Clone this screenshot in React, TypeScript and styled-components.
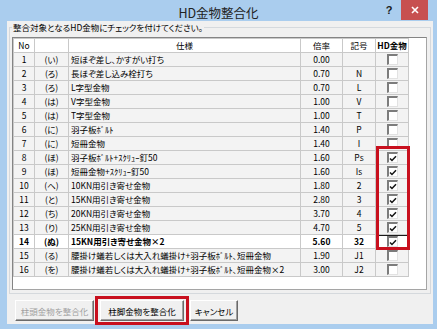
import React from 'react';
import styled, { createGlobalStyle } from 'styled-components';

const GlobalStyle = createGlobalStyle`
  html, body {
    margin: 0;
    padding: 0;
  }
  body {
    font-family: "Noto Sans CJK JP", "Noto Sans", sans-serif;
    font-feature-settings: "palt";
    background: #ffffff;
    color: #000000;
  }
  * {
    box-sizing: border-box;
  }
`;

type Item = {
  no: number;
  kana: string;
  spec: string;
  rate: string;
  code: string;
  checked: boolean;
};

const items: Item[] = [
  { no: 1, kana: '(い)', spec: '短ほぞ差し、かすがい打ち', rate: '0.00', code: '', checked: false },
  { no: 2, kana: '(ろ)', spec: '長ほぞ差し込み栓打ち', rate: '0.70', code: 'N', checked: false },
  { no: 3, kana: '(ろ)', spec: 'L字型金物', rate: '0.70', code: 'L', checked: false },
  { no: 4, kana: '(は)', spec: 'V字型金物', rate: '1.00', code: 'V', checked: false },
  { no: 5, kana: '(は)', spec: 'T字型金物', rate: '1.00', code: 'T', checked: false },
  { no: 6, kana: '(に)', spec: '羽子板ﾎﾞﾙﾄ', rate: '1.40', code: 'P', checked: false },
  { no: 7, kana: '(に)', spec: '短冊金物', rate: '1.40', code: 'I', checked: false },
  { no: 8, kana: '(ほ)', spec: '羽子板ﾎﾞﾙﾄ+ｽｸﾘｭｰ釘50', rate: '1.60', code: 'Ps', checked: true },
  { no: 9, kana: '(ほ)', spec: '短冊金物+ｽｸﾘｭｰ釘50', rate: '1.60', code: 'Is', checked: true },
  { no: 10, kana: '(へ)', spec: '10KN用引き寄せ金物', rate: '1.80', code: '2', checked: true },
  { no: 11, kana: '(と)', spec: '15KN用引き寄せ金物', rate: '2.80', code: '3', checked: true },
  { no: 12, kana: '(ち)', spec: '20KN用引き寄せ金物', rate: '3.70', code: '4', checked: true },
  { no: 13, kana: '(り)', spec: '25KN用引き寄せ金物', rate: '4.70', code: '5', checked: true },
  { no: 14, kana: '(ぬ)', spec: '15KN用引き寄せ金物×2', rate: '5.60', code: '32', checked: true },
  { no: 15, kana: '(る)', spec: '腰掛け蟻若しくは大入れ蟻掛け+羽子板ﾎﾞﾙﾄ､短冊金物', rate: '1.90', code: 'J1', checked: false },
  { no: 16, kana: '(を)', spec: '腰掛け蟻若しくは大入れ蟻掛け+羽子板ﾎﾞﾙﾄ､短冊金物×2', rate: '3.00', code: 'J2', checked: false },
];

const CURRENT_ROW = 14;
const COLUMNS = '21px 34px 232px 42px 33px 33px';

const Window = styled.div`
  width: 437px;
  height: 329px;
  background: #aacdee;
  display: flex;
  flex-direction: column;
  overflow: hidden;
`;

const TitleBar = styled.div`
  height: 21px;
  flex: none;
  display: grid;
  grid-template-columns: 1fr auto 1fr;
  align-items: start;
`;

const Title = styled.div`
  grid-column: 2;
  padding-top: 3px;
  font-size: 12.5px;
  line-height: 20px;
  color: #222222;
`;

const CaptionButtons = styled.div`
  grid-column: 3;
  justify-self: end;
  display: flex;
  align-items: flex-start;
  padding-right: 9px;
`;

const HelpButton = styled.div`
  width: 12px;
  margin-right: 6px;
  font-family: "Liberation Sans", Arial, sans-serif;
  font-size: 11px;
  font-weight: bold;
  line-height: 20px;
  text-align: center;
  color: #1a1a1a;
`;

const CloseButton = styled.div`
  width: 27px;
  height: 20px;
  background: #c75050;
  color: #ffffff;
  display: flex;
  align-items: center;
  justify-content: center;
`;

const Client = styled.div`
  flex: 1;
  margin: 0 4px 5px 7px;
  background: #f0f0f0;
  display: flex;
  flex-direction: column;
`;

const GroupBox = styled.fieldset`
  margin: 0 2px;
  padding: 4px 3px 3px 2px;
  border: 1px solid #d5d9dd;
  min-width: 0;
`;

const Legend = styled.legend`
  padding: 0 1px;
  font-size: 8.5px;
  line-height: 12px;
`;

const ListView = styled.div`
  position: relative;
  height: 253px;
  background: #ffffff;
  border: 1px solid #a5a5a5;
  border-top-color: #848484;
  border-left-color: #848484;
`;

const Table = styled.div`
  width: fit-content;
  border-top: 1px solid #c9c9c9;
  border-left: 1px solid #c9c9c9;
  font-size: 8.5px;
`;

const Row = styled.div<{ $current?: boolean; $header?: boolean }>`
  display: grid;
  grid-template-columns: ${COLUMNS};
  height: 14px;
  background: ${(p) => (p.$header || p.$current ? '#ffffff' : '#f3f3f3')};
  font-weight: ${(p) => (p.$current ? 'bold' : 'normal')};
`;

const Cell = styled.div<{ $align?: 'left' | 'center' }>`
  border-right: 1px solid #c9c9c9;
  border-bottom: 1px solid #c9c9c9;
  line-height: 13px;
  white-space: nowrap;
  overflow: hidden;
  text-align: ${(p) => p.$align ?? 'center'};
  padding-left: ${(p) => (p.$align === 'left' ? '2px' : '0')};
`;

const HeadCell = styled(Cell)<{ $bold?: boolean }>`
  font-weight: ${(p) => (p.$bold ? 'bold' : 'normal')};
`;

const CheckCell = styled(Cell)<{ $focused?: boolean }>`
  padding-top: 1px;
  box-shadow: ${(p) => (p.$focused ? 'inset 0 1px 0 #1a1a1a' : 'none')};
`;

const CheckBox = styled.span`
  display: flex;
  align-items: center;
  justify-content: center;
  width: 11px;
  height: 11px;
  margin: 0 auto;
  background: #ffffff;
  border-top: 2px solid #7c7c7c;
  border-left: 2px solid #7c7c7c;
  border-right: 1px solid #e2e2e2;
  border-bottom: 1px solid #e2e2e2;
`;

const CheckHighlight = styled.div`
  position: absolute;
  left: 363px;
  top: 108px;
  width: 34px;
  height: 104px;
  border: 3px solid #c8101e;
  pointer-events: none;
`;

const ButtonRow = styled.div`
  display: flex;
  gap: 6px;
  padding: 6px 0 0 8px;
`;

const Button = styled.button<{ $w: number }>`
  width: ${(p) => p.$w}px;
  height: 21px;
  padding: 0;
  font-family: inherit;
  font-feature-settings: "palt";
  font-size: 8.5px;
  color: ${(p) => (p.disabled ? '#a0a0a0' : '#000000')};
  background: #f0f0f0;
  border: 1px solid;
  border-color: #ffffff #6a6a6a #6a6a6a #ffffff;
  box-shadow: inset -1px -1px 0 #a0a0a0;
`;

const ButtonHighlight = styled.div`
  position: relative;
  display: flex;

  &::after {
    content: '';
    position: absolute;
    inset: -4px -5px;
    border: 3px solid #c8101e;
    pointer-events: none;
  }
`;

function CheckMark() {
  return (
    <svg width="8" height="7" viewBox="0 0 8 7">
      <path d="M1 3.4 L3 5.5 L7 1.2" fill="none" stroke="#151515" strokeWidth="1.5" />
    </svg>
  );
}

function CloseGlyph() {
  return (
    <svg width="8" height="8" viewBox="0 0 8 8">
      <path d="M1 1 L7 7 M7 1 L1 7" stroke="#ffffff" strokeWidth="1.6" />
    </svg>
  );
}

export default function App() {
  return (
    <>
      <GlobalStyle />
      <Window>
        <TitleBar>
          <Title>HD金物整合化</Title>
          <CaptionButtons>
            <HelpButton>?</HelpButton>
            <CloseButton>
              <CloseGlyph />
            </CloseButton>
          </CaptionButtons>
        </TitleBar>

        <Client>
          <GroupBox>
            <Legend>整合対象となるHD金物にチェックを付けてください。</Legend>
            <ListView>
              <Table>
                <Row $header>
                  <HeadCell>No</HeadCell>
                  <HeadCell></HeadCell>
                  <HeadCell>仕様</HeadCell>
                  <HeadCell>倍率</HeadCell>
                  <HeadCell>記号</HeadCell>
                  <HeadCell $bold>HD金物</HeadCell>
                </Row>
                {items.map((item) => (
                  <Row key={item.no} $current={item.no === CURRENT_ROW}>
                    <Cell>{item.no}</Cell>
                    <Cell>{item.kana}</Cell>
                    <Cell $align="left">{item.spec}</Cell>
                    <Cell>{item.rate}</Cell>
                    <Cell>{item.code}</Cell>
                    <CheckCell $focused={item.no === CURRENT_ROW}>
                      <CheckBox>{item.checked && <CheckMark />}</CheckBox>
                    </CheckCell>
                  </Row>
                ))}
              </Table>
              <CheckHighlight />
            </ListView>
          </GroupBox>

          <ButtonRow>
            <Button $w={79} disabled>
              柱頭金物を整合化
            </Button>
            <ButtonHighlight>
              <Button $w={84}>柱脚金物を整合化</Button>
            </ButtonHighlight>
            <Button $w={48}>キャンセル</Button>
          </ButtonRow>
        </Client>
      </Window>
    </>
  );
}
